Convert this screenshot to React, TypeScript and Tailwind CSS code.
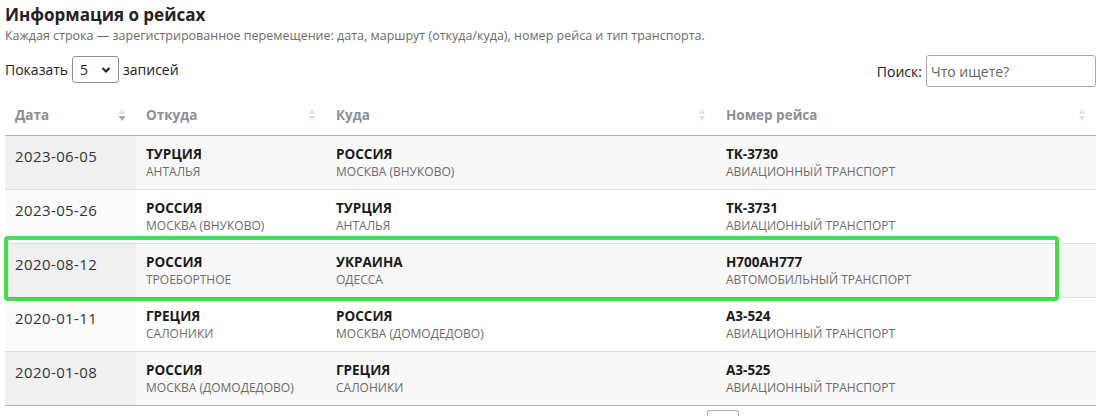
import React from "react";

type Row = { date: string; fromC: string; fromCity: string; toC: string; toCity: string; num: string; type: string };

const rows: Row[] = [
  { date: "2023-06-05", fromC: "ТУРЦИЯ", fromCity: "АНТАЛЬЯ", toC: "РОССИЯ", toCity: "МОСКВА (ВНУКОВО)", num: "TK-3730", type: "АВИАЦИОННЫЙ ТРАНСПОРТ" },
  { date: "2023-05-26", fromC: "РОССИЯ", fromCity: "МОСКВА (ВНУКОВО)", toC: "ТУРЦИЯ", toCity: "АНТАЛЬЯ", num: "TK-3731", type: "АВИАЦИОННЫЙ ТРАНСПОРТ" },
  { date: "2020-08-12", fromC: "РОССИЯ", fromCity: "ТРОЕБОРТНОЕ", toC: "УКРАИНА", toCity: "ОДЕССА", num: "Н700АН777", type: "АВТОМОБИЛЬНЫЙ ТРАНСПОРТ" },
  { date: "2020-01-11", fromC: "ГРЕЦИЯ", fromCity: "САЛОНИКИ", toC: "РОССИЯ", toCity: "МОСКВА (ДОМОДЕДОВО)", num: "A3-524", type: "АВИАЦИОННЫЙ ТРАНСПОРТ" },
  { date: "2020-01-08", fromC: "РОССИЯ", fromCity: "МОСКВА (ДОМОДЕДОВО)", toC: "ГРЕЦИЯ", toCity: "САЛОНИКИ", num: "A3-525", type: "АВИАЦИОННЫЙ ТРАНСПОРТ" },
];

function SortIcon({ active }: { active?: boolean }) {
  return (
    <svg width="8" height="14" viewBox="0 0 8 14" className="shrink-0">
      <path d="M4 1 L7.5 6 L0.5 6 Z" fill="#e2e2e2" />
      <path d="M4 13 L7.5 8 L0.5 8 Z" fill={active ? "#a9acb3" : "#e2e2e2"} />
    </svg>
  );
}

function Cell({ top, bottom }: { top: string; bottom: string }) {
  return (
    <div className="flex flex-col">
      <span className="text-[13.5px] font-bold text-[#1a1a1a] leading-[18px]">{top}</span>
      <span className="text-[12px] text-[#6b6b6b] leading-[17px]">{bottom}</span>
    </div>
  );
}

export default function App() {
  return (
    <div className="w-[1111px] h-[416px] overflow-hidden bg-white px-[5px] text-[#333]" style={{ fontFamily: '"Open Sans", "Noto Sans", sans-serif' }}>
      <h1 className="pt-[3px] text-[17px] font-bold text-[#222] leading-[24px]">Информация о рейсах</h1>
      <p className="mt-[1px] text-[12.5px] text-[#6b6b6b] leading-[16px]">
        Каждая строка — зарегистрированное перемещение: дата, маршрут (откуда/куда), номер рейса и тип транспорта.
      </p>
      <div className="mt-[11px] flex w-[1091px] items-start justify-between">
        <div className="mt-[1px] flex items-center gap-[4px] text-[14px] text-[#222]">
          <span>Показать</span>
          <div className="flex h-[27px] w-[47px] items-center justify-between rounded-[3px] border border-[#8f8f8f] bg-white px-[7px]">
            <span className="text-[14px]">5</span>
            <svg width="10" height="8" viewBox="0 0 10 8"><path d="M1.5 2 L5 5.5 L8.5 2" stroke="#222" strokeWidth="2" fill="none" /></svg>
          </div>
          <span>записей</span>
        </div>
        <div className="flex items-center gap-[4px] text-[14px] text-[#222]">
          <span>Поиск:</span>
          <div className="flex h-[32px] w-[170px] items-center rounded-[3px] border border-[#aaa] bg-white px-[4px] text-[14px] text-[#666]">
            Что ищете?
          </div>
        </div>
      </div>
      <div className="relative mt-[8px]">
        <table className="w-[1091px] border-collapse text-left">
          <thead>
            <tr className="h-[40px] border-b border-[#b4b4b4]">
              {[
                ["Дата", "w-[131px]", true],
                ["Откуда", "w-[190px]", false],
                ["Куда", "w-[390px]", false],
                ["Номер рейса", "", false],
              ].map(([label, w, act]) => (
                <th key={label as string} className={`${w} px-[10px] font-bold text-[13.5px] text-[#8a8e98]`}>
                  <div className="flex items-center justify-between">
                    <span>{label as string}</span>
                    <SortIcon active={act as boolean} />
                  </div>
                </th>
              ))}
            </tr>
          </thead>
          <tbody>
            {rows.map((r, i) => {
              const odd = i % 2 === 0;
              return (
                <tr key={i} className={`h-[54px] border-b ${i === 4 ? "border-[#b4b4b4]" : "border-[#dedede]"} ${odd ? "bg-[#f8f8f8]" : "bg-white"}`}>
                  <td className={`px-[10px] pt-[9px] align-top text-[15px] tracking-[0.4px] text-[#333] ${odd ? "bg-[#f0f0f0]" : "bg-[#fbfbfd]"}`}>{r.date}</td>
                  <td className="px-[10px] pt-[9px] align-top"><Cell top={r.fromC} bottom={r.fromCity} /></td>
                  <td className="px-[10px] pt-[9px] align-top"><Cell top={r.toC} bottom={r.toCity} /></td>
                  <td className="px-[10px] pt-[9px] align-top"><Cell top={r.num} bottom={r.type} /></td>
                </tr>
              );
            })}
          </tbody>
        </table>
        <div className="pointer-events-none absolute left-[-1px] top-[141px] h-[65px] w-[1055px] rounded-[4px] border-[3px] border-[#45de4a] shadow-[inset_0_0_0_1px_rgba(0,0,0,0.35)]" />
        <div className="mt-[4px] ml-[702px] h-[10px] w-[32px] rounded-t-[3px] border border-b-0 border-[#aaa]" />
      </div>
    </div>
  );
}
